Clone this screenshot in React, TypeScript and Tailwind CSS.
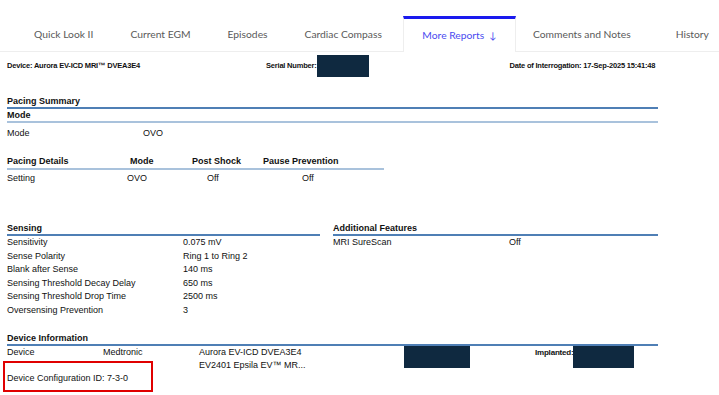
import React from "react";

const tabs = ["Quick Look II", "Current EGM", "Episodes", "Cardiac Compass"];

function Redacted({ w }: { w: string }) {
  return <div className={`${w} h-[22px] shrink-0 bg-[#0f2940]`} />;
}

function SectionTitle({ children, w = "w-[651px]" }: { children: React.ReactNode; w?: string }) {
  return (
    <div className={`${w} border-b-2 border-[#4f7fb5] font-bold leading-[12px]`}>{children}</div>
  );
}

export default function App() {
  return (
    <div className="w-[719px] h-[395px] bg-white overflow-hidden" style={{ fontFamily: "'Liberation Sans', Arial, sans-serif" }}>
      {/* Tab bar */}
      <div className="h-[52px] flex items-end border-b border-[#eeeeee] text-[10.3px] text-[#5a5a5a] whitespace-nowrap" style={{ fontFamily: "Lato, 'Open Sans', sans-serif" }}>
        <div className="flex items-center h-[36px] pt-[3px] pl-[34px] gap-[37px] shrink-0">
          {tabs.map((t) => (
            <span key={t}>{t}</span>
          ))}
        </div>
        <div className="ml-[21px] w-[113px] h-[36px] shrink-0 border-t-[3px] border-[#1a1aee] border-x border-x-[#eeeeee] bg-white -mb-px flex items-center justify-center pt-[1px] text-[#4b4bf0]">
          More Reports <span className="ml-[5px] text-[9.5px]">↓</span>
        </div>
        <div className="flex items-center h-[36px] pt-[3px] pl-[17px] gap-[45px] shrink-0">
          <span>Comments and Notes</span>
          <span>History</span>
        </div>
      </div>

      {/* Report */}
      <div className="pl-[7px] text-[#111] text-[9px]">
        <div className="flex items-center h-[24px] mt-[2px] text-[7.5px] font-bold tracking-[-0.2px]">
          <span className="w-[259px]">Device: Aurora EV-ICD MRI™ DVEA3E4</span>
          <span>Serial Number:</span>
          <Redacted w="w-[52px]" />
          <span className="ml-[141px]">Date of Interrogation: 17-Sep-2025 15:41:48</span>
        </div>

        <div className="mt-[17px]">
          <SectionTitle>Pacing Summary</SectionTitle>
          <div className="w-[651px] border-b-2 border-[#a9c2dc] font-bold leading-[12px]">Mode</div>
          <div className="flex mt-[4px] leading-[12px]">
            <span className="w-[136px]">Mode</span>
            <span>OVO</span>
          </div>
        </div>

        <div className="mt-[16px]">
          <div className="w-[377px] border-b-2 border-[#a9c2dc] flex font-bold leading-[12px] pb-[1px]">
            <span className="w-[123px]">Pacing Details</span>
            <span className="w-[62px]">Mode</span>
            <span className="w-[71px]">Post Shock</span>
            <span>Pause Prevention</span>
          </div>
          <div className="flex mt-[2px] leading-[12px]">
            <span className="w-[120px]">Setting</span>
            <span className="w-[80px]">OVO</span>
            <span className="w-[95px]">Off</span>
            <span>Off</span>
          </div>
        </div>

        <div className="flex mt-[38px]">
          <div className="w-[326px]">
            <SectionTitle w="w-[313px]">Sensing</SectionTitle>
            {[
              ["Sensitivity", "0.075 mV"],
              ["Sense Polarity", "Ring 1 to Ring 2"],
              ["Blank after Sense", "140 ms"],
              ["Sensing Threshold Decay Delay", "650 ms"],
              ["Sensing Threshold Drop Time", "2500 ms"],
              ["Oversensing Prevention", "3"],
            ].map(([k, v]) => (
              <div key={k} className="flex h-[13.6px] leading-[13.6px]">
                <span className="w-[176px]">{k}</span>
                <span>{v}</span>
              </div>
            ))}
          </div>
          <div>
            <SectionTitle w="w-[325px]">Additional Features</SectionTitle>
            <div className="flex h-[13.6px] leading-[13.6px]">
              <span className="w-[176px]">MRI SureScan</span>
              <span>Off</span>
            </div>
          </div>
        </div>

        <div className="mt-[14px]">
          <SectionTitle>Device Information</SectionTitle>
          <div className="flex items-start">
            <span className="w-[96px] leading-[13px]">Device</span>
            <span className="w-[96px] leading-[13px]">Medtronic</span>
            <div className="w-[205px] leading-[13px]">
              <div>Aurora EV-ICD DVEA3E4</div>
              <div>EV2401 Epsila EV™ MR...</div>
            </div>
            <Redacted w="w-[66px]" />
            <span className="ml-[65px] text-[8px] font-bold leading-[13px] tracking-[-0.2px]">Implanted:</span>
            <Redacted w="w-[61px]" />
          </div>
        </div>
      </div>
      <div className="ml-[3px] mt-[-11px] w-[150px] h-[31px] border-2 border-[#e00000] flex items-center pl-[2px] pt-[6px] text-[9px] text-[#111]">
        Device Configuration ID: 7-3-0
      </div>
    </div>
  );
}
